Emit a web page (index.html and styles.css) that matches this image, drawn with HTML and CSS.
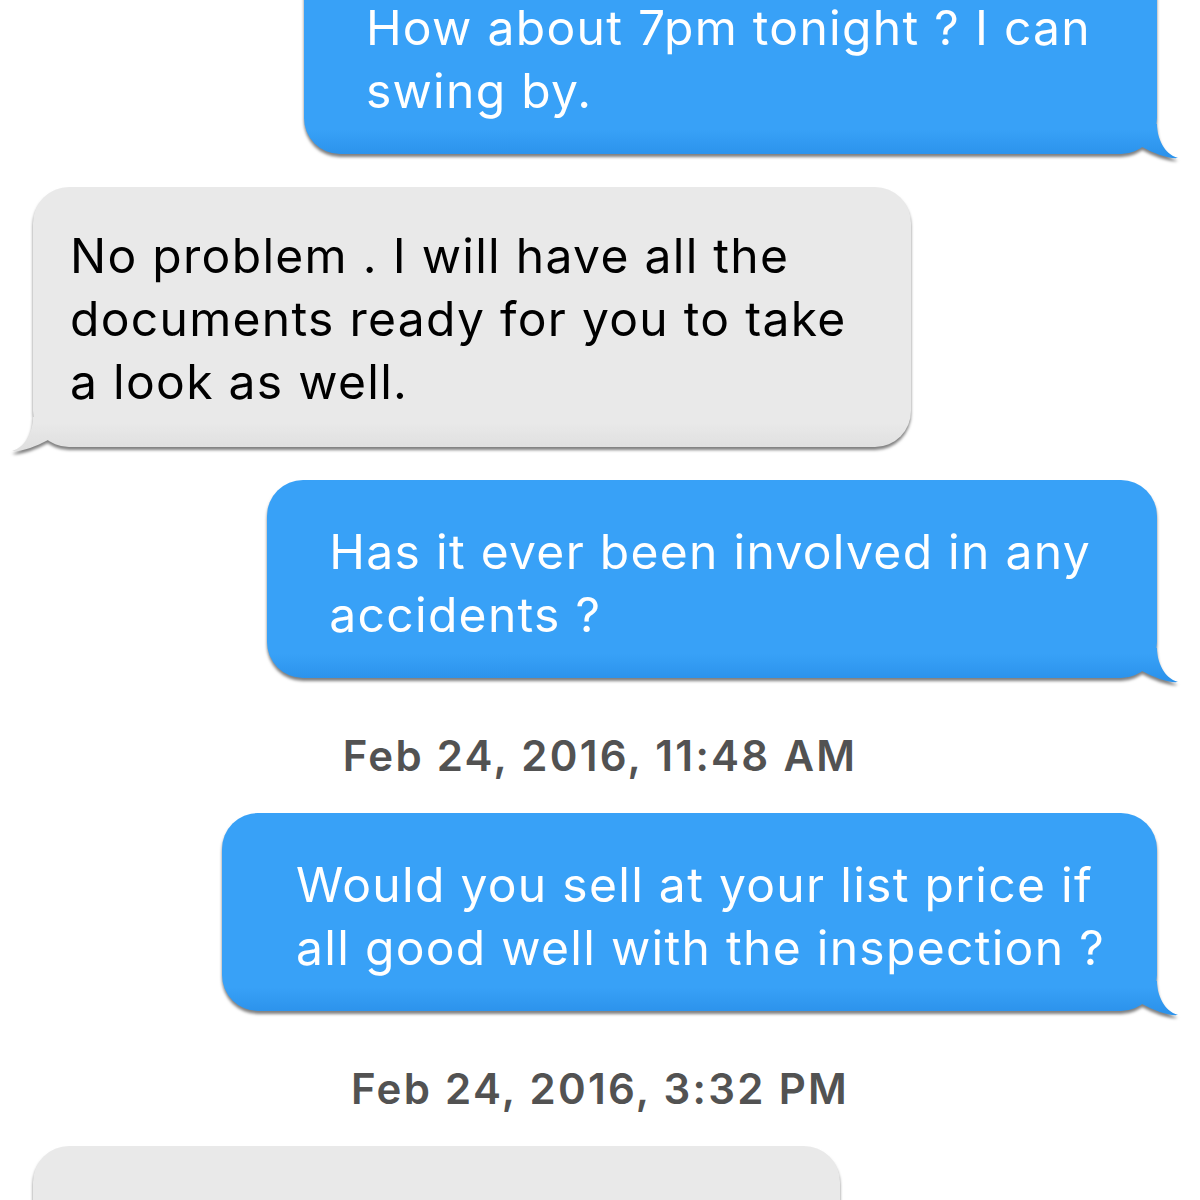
FILE: index.html
```html
<!DOCTYPE html>
<html lang="en">
<head>
    <meta charset="UTF-8">
    <meta name="viewport" content="width=device-width, initial-scale=1.0">
    <title>Messages</title>
    <link rel="stylesheet" href="styles.css">
</head>
<body>

<svg class="defs" aria-hidden="true">
    <defs>
        <linearGradient id="fade-blue" gradientUnits="userSpaceOnUse" x1="0" y1="6" x2="0" y2="30">
            <stop offset="0" stop-color="#38a1f7"/>
            <stop offset="1" stop-color="#2c93ec"/>
        </linearGradient>
        <linearGradient id="fade-gray" gradientUnits="userSpaceOnUse" x1="0" y1="6" x2="0" y2="30">
            <stop offset="0" stop-color="#e9e9e9"/>
            <stop offset="1" stop-color="#e0e0e0"/>
        </linearGradient>
    </defs>
</svg>

<main class="thread">
    <div class="msg sent">
        <div class="bubble">How about 7pm tonight ? I can<br>swing by.<svg class="tail" viewBox="0 0 42 36"><path d="M0 0H20C20 14 27 30 41 34C32 35 18 30 5 23Z"/></svg></div>
    </div>
    <div class="msg received">
        <div class="bubble">No problem . I will have all the<br>documents ready for you to take<br>a look as well.<svg class="tail" viewBox="0 0 42 36"><path d="M0 0H20C20 14 27 30 41 34C32 35 18 30 5 23Z"/></svg></div>
    </div>
    <div class="msg sent">
        <div class="bubble">Has it ever been involved in any<br>accidents ?<svg class="tail" viewBox="0 0 42 36"><path d="M0 0H20C20 14 27 30 41 34C32 35 18 30 5 23Z"/></svg></div>
    </div>

    <div class="stamp">Feb 24, 2016, 11:48 AM</div>

    <div class="msg sent">
        <div class="bubble wide">Would you sell at your list price if<br>all good well with the inspection ?<svg class="tail" viewBox="0 0 42 36"><path d="M0 0H20C20 14 27 30 41 34C32 35 18 30 5 23Z"/></svg></div>
    </div>

    <div class="stamp">Feb 24, 2016, 3:32 PM</div>

    <div class="msg received">
        <div class="bubble cut">&nbsp;<br>&nbsp;</div>
    </div>
</main>

</body>
</html>
```

FILE: styles.css
```css
* {
    padding: 0;
    margin: 0;
    box-sizing: border-box;
}
body {
    background: #fff;
    font-family: "Inter", "Liberation Sans", sans-serif;
    overflow: hidden;
}
.defs {
    position: absolute;
    width: 0;
    height: 0;
}
.thread {
    display: flex;
    flex-direction: column;
    gap: 33px;
    margin-top: -44px;
}
.msg {
    display: flex;
}
.msg.sent {
    justify-content: flex-end;
    padding-right: 43px;
}
.msg.received {
    justify-content: flex-start;
    padding-left: 33px;
}
.bubble {
    position: relative;
    font-size: 48px;
    letter-spacing: 1.3px;
    line-height: 63px;
    white-space: nowrap;
    border-radius: 36px;
    padding: 40px 66px 32px 62px;
    filter: drop-shadow(0 3px 1.5px rgba(0, 0, 0, 0.5));
}
.bubble.wide {
    padding-right: 52px;
    padding-left: 74px;
}
.sent .bubble {
    color: #fff;
    background: linear-gradient(to bottom, #38a1f7 calc(100% - 24px), #2c93ec);
}
.received .bubble {
    color: #000;
    padding: 37px 64px 34px 37px;
    background: linear-gradient(to bottom, #e9e9e9 calc(100% - 24px), #e0e0e0);
}
.bubble.cut {
    width: 807px;
}
.tail {
    position: absolute;
    bottom: -6px;
    width: 42px;
    height: 36px;
    overflow: visible;
}
.sent .tail {
    right: -22px;
    fill: url(#fade-blue);
}
.received .tail {
    left: -22px;
    transform: scaleX(-1);
    fill: url(#fade-gray);
}
.stamp {
    text-align: center;
    color: #525252;
    font-size: 42px;
    letter-spacing: 2.3px;
    font-weight: 600;
    line-height: 50px;
    margin: 20px 0 -1px;
}
```
